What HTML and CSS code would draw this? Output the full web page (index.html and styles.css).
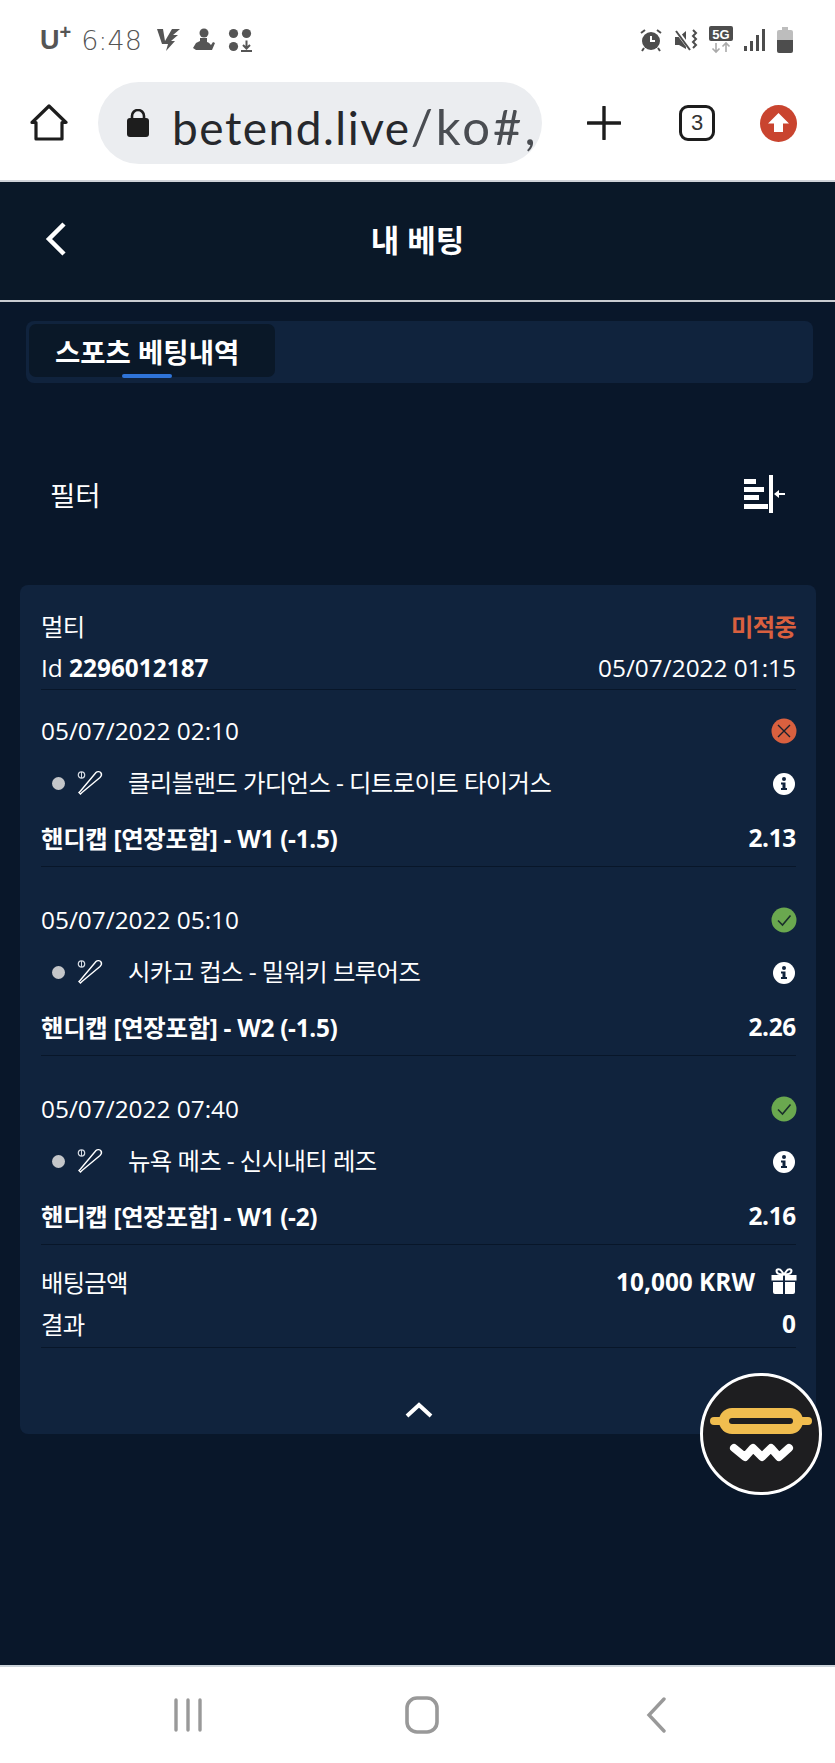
FILE: index.html
```html
<!DOCTYPE html>
<html lang="ko">
<head>
    <meta charset="UTF-8">
    <meta name="viewport" content="width=device-width, initial-scale=1.0">
    <title>내 베팅</title>
    <link rel="stylesheet" href="styles.css">
</head>
<body>
    <div class="status-bar">
        <div class="status-left">
            <span class="carrier">U<sup>+</sup></span>
            <span class="clock">6:48</span>
            <svg class="st-first" width="24" height="24" viewBox="0 0 24 24"><path d="M1 1h6l2 12L16 1h8l-7 6h5l-7 6h4l-9 10 2-7H6z" fill="#555"/></svg>
            <svg width="24" height="24" viewBox="0 0 24 24"><circle cx="12" cy="5" r="4.500" fill="#555"/><path d="M8 10h7v4c2 .5 3 2 4 3l2-3 2 1-3 7H4l-3-2 3-5 4-2z" fill="#555"/></svg>
            <svg width="24" height="24" viewBox="0 0 24 24"><circle cx="5.500" cy="5.500" r="4.600" fill="#555"/><circle cx="18.500" cy="5.500" r="4.600" fill="#555"/><circle cx="5.500" cy="18.500" r="4.600" fill="#555"/><path d="M18.500 12.500v8M15 17l3.500 3.500L22 17M13 23h11" stroke="#555" stroke-width="2" fill="none"/></svg>
        </div>
        <div class="status-right">
            <svg width="24" height="24" viewBox="0 0 24 24"><circle cx="12" cy="13" r="9" fill="#4d4d4d"/><path d="M12 8v5h4" stroke="#fff" stroke-width="2" fill="none"/><path d="M2 5l4-3M22 5l-4-3M5 20l-2 3M19 20l2 3" stroke="#4d4d4d" stroke-width="2"/></svg>
            <svg width="24" height="24" viewBox="0 0 24 24"><path d="M1 9h4l7-6v18l-7-4H1z" fill="#4d4d4d"/><path d="M2 2l15 20" stroke="#fff" stroke-width="4"/><path d="M2 3l14 19" stroke="#4d4d4d" stroke-width="2"/><path d="M19 2l3 3-3 3 3 3-3 3 3 3-3 3" stroke="#4d4d4d" stroke-width="2" fill="none"/></svg>
            <svg width="24" height="28" viewBox="0 0 24 28"><rect width="24" height="15" rx="2" fill="#4d4d4d"/><text x="12" y="12.500" class="five-g">5G</text><path d="M7 17v9M3.500 22.500l3.500 3.500 3.500-3.500M17 26v-9M13.500 20.500l3.500-3.500 3.500 3.500" stroke="#aaa" stroke-width="1.600" fill="none"/></svg>
            <svg width="22" height="24" viewBox="0 0 22 24"><rect x="0" y="18" width="3" height="5" fill="#4d4d4d"/><rect x="6" y="13" width="3" height="10" fill="#4d4d4d"/><rect x="12" y="7" width="3" height="16" fill="#4d4d4d"/><rect x="18" y="1" width="3" height="22" fill="#4d4d4d"/></svg>
            <svg width="16" height="26" viewBox="0 0 16 26"><path d="M5 0h6v3h3a2 2 0 0 1 2 2v8H0V5a2 2 0 0 1 2-2h3z" fill="#bdbdbd"/><path d="M0 13h16v11a2 2 0 0 1-2 2H2a2 2 0 0 1-2-2z" fill="#4d4d4d"/></svg>
        </div>
    </div>

    <div class="browser-bar">
        <svg class="home-icon" width="38" height="38" viewBox="0 0 38 38"><path d="M2 18.500L19 2l17 16.500h-4V35H6V18.500z" fill="none" stroke="#1d1d1d" stroke-width="3.200" stroke-linejoin="round"/></svg>
        <div class="url-pill">
            <svg width="22" height="28" viewBox="0 0 22 28"><rect y="9" width="22" height="19" rx="3" fill="#1d1d1d"/><path d="M5 11V7a6 6 0 0 1 12 0v4" fill="none" stroke="#1d1d1d" stroke-width="2.600"/></svg>
            <span class="url-text">betend.live<span class="url-path">/ko#,</span></span>
        </div>
        <svg class="plus-icon" width="34" height="34" viewBox="0 0 34 34"><path d="M17 1v32M1 17h32" stroke="#1d1d1d" stroke-width="3.400" stroke-linecap="round"/></svg>
        <div class="tab-count">3</div>
        <svg class="update-icon" width="37" height="37" viewBox="0 0 37 37"><circle cx="18.500" cy="18.500" r="18.500" fill="#c9442f"/><path d="M18.500 8L29 18.500h-6V27h-9v-8.500H8z" fill="#fff"/></svg>
    </div>

    <div class="page">
        <header class="page-header">
            <svg class="back-icon" width="22" height="34" viewBox="0 0 22 34"><path d="M19 2L4 17l15 15" fill="none" stroke="#fff" stroke-width="4.500"/></svg>
            <h1>내 베팅</h1>
        </header>

        <div class="tabs">
            <div class="tab-active">스포츠 베팅내역<span class="tab-line"></span></div>
        </div>

        <div class="filter-row">
            <span>필터</span>
            <svg width="42" height="38" viewBox="0 0 42 38"><path d="M0 4h12v5H0zM0 12h20v5H0zM0 20h15v5H0zM0 29h24v5H0z" fill="#fff"/><rect x="25" y="0" width="4" height="38" fill="#fff"/><path d="M30 19l5-4v3h6v2h-6v3z" fill="#fff"/></svg>
        </div>

        <section class="bet-card">
            <div class="card-head">
                <div class="row"><span class="ko">멀티</span><span class="lost-text">미적중</span></div>
                <div class="row"><span>Id <b>2296012187</b></span><span>05/07/2022 01:15</span></div>
            </div>

            <div class="game">
                <div class="row"><span>05/07/2022 02:10</span>
                    <svg class="result" width="26" height="26" viewBox="0 0 26 26"><circle cx="13" cy="13" r="12.500" fill="#d9603f"/><path d="M7 7l12 12M19 7L7 19" stroke="#1a1f2b" stroke-width="1.400"/></svg>
                </div>
                <div class="row team-row">
                    <span class="teams"><i class="dot"></i>
                        <svg class="bat" width="28" height="26" viewBox="0 0 28 26"><circle cx="5.500" cy="5" r="3.200" fill="none" stroke="#d5dbe3" stroke-width="1.200"/><path d="M5.500 2v6" stroke="#d5dbe3" stroke-width="1"/><path d="M20 2.500c1.500-1.500 4-1 5 .5s.5 3-1 4.500L9 20l-3 2.500L4.500 24 3 22.500l1.500-1.500L7 18z" fill="none" stroke="#fff" stroke-width="1.400"/></svg>
                        클리블랜드 가디언스 - 디트로이트 타이거스</span>
                    <svg class="info" width="22" height="22" viewBox="0 0 22 22"><circle cx="11" cy="11" r="11" fill="#fff"/><circle cx="11" cy="6" r="2" fill="#10233d"/><path d="M8 9.500h4.500V15H14v2H8v-2h1.500v-3.500H8z" fill="#10233d"/></svg>
                </div>
                <div class="row market"><span>핸디캡 [연장포함] - W1 (-1.5)</span><span>2.13</span></div>
            </div>

            <div class="game">
                <div class="row"><span>05/07/2022 05:10</span>
                    <svg class="result" width="26" height="26" viewBox="0 0 26 26"><circle cx="13" cy="13" r="12.500" fill="#6aa84f"/><path d="M7 13.500l4.500 4.500L19.500 8.500" fill="none" stroke="#1a2f2b" stroke-width="1.600"/></svg>
                </div>
                <div class="row team-row">
                    <span class="teams"><i class="dot"></i>
                        <svg class="bat" width="28" height="26" viewBox="0 0 28 26"><circle cx="5.500" cy="5" r="3.200" fill="none" stroke="#d5dbe3" stroke-width="1.200"/><path d="M5.500 2v6" stroke="#d5dbe3" stroke-width="1"/><path d="M20 2.500c1.500-1.500 4-1 5 .5s.5 3-1 4.500L9 20l-3 2.500L4.500 24 3 22.500l1.500-1.500L7 18z" fill="none" stroke="#fff" stroke-width="1.400"/></svg>
                        시카고 컵스 - 밀워키 브루어즈</span>
                    <svg class="info" width="22" height="22" viewBox="0 0 22 22"><circle cx="11" cy="11" r="11" fill="#fff"/><circle cx="11" cy="6" r="2" fill="#10233d"/><path d="M8 9.500h4.500V15H14v2H8v-2h1.500v-3.500H8z" fill="#10233d"/></svg>
                </div>
                <div class="row market"><span>핸디캡 [연장포함] - W2 (-1.5)</span><span>2.26</span></div>
            </div>

            <div class="game">
                <div class="row"><span>05/07/2022 07:40</span>
                    <svg class="result" width="26" height="26" viewBox="0 0 26 26"><circle cx="13" cy="13" r="12.500" fill="#6aa84f"/><path d="M7 13.500l4.500 4.500L19.500 8.500" fill="none" stroke="#1a2f2b" stroke-width="1.600"/></svg>
                </div>
                <div class="row team-row">
                    <span class="teams"><i class="dot"></i>
                        <svg class="bat" width="28" height="26" viewBox="0 0 28 26"><circle cx="5.500" cy="5" r="3.200" fill="none" stroke="#d5dbe3" stroke-width="1.200"/><path d="M5.500 2v6" stroke="#d5dbe3" stroke-width="1"/><path d="M20 2.500c1.500-1.500 4-1 5 .5s.5 3-1 4.500L9 20l-3 2.500L4.500 24 3 22.500l1.500-1.500L7 18z" fill="none" stroke="#fff" stroke-width="1.400"/></svg>
                        뉴욕 메츠 - 신시내티 레즈</span>
                    <svg class="info" width="22" height="22" viewBox="0 0 22 22"><circle cx="11" cy="11" r="11" fill="#fff"/><circle cx="11" cy="6" r="2" fill="#10233d"/><path d="M8 9.500h4.500V15H14v2H8v-2h1.500v-3.500H8z" fill="#10233d"/></svg>
                </div>
                <div class="row market"><span>핸디캡 [연장포함] - W1 (-2)</span><span>2.16</span></div>
            </div>

            <div class="totals">
                <div class="row"><span class="ko">배팅금액</span>
                    <span class="amount"><b>10,000 KRW</b>
                        <svg width="26" height="26" viewBox="0 0 25 26"><path d="M0 7h11.500v5.500H0zM13.500 7H25v5.500H13.500zM1.500 14h10v12h-8a2 2 0 0 1-2-2zM13.500 14h10v10a2 2 0 0 1-2 2h-8z" fill="#fff"/><path d="M12 6.500C9 6.500 5 5.500 5 3s3.500-2.500 5 0l2.500 3.500 2.500-3.500c1.500-2.500 5-2.500 5 0s-4 3.500-8 3.500" fill="none" stroke="#fff" stroke-width="2"/></svg>
                    </span>
                </div>
                <div class="row"><span class="ko">결과</span><b>0</b></div>
            </div>

            <div class="collapse">
                <svg width="28" height="16" viewBox="0 0 28 16"><path d="M2 14L14 3l12 11" fill="none" stroke="#fff" stroke-width="4"/></svg>
            </div>
        </section>

        <div class="chat-btn">
            <svg class="chat-logo" width="102" height="56" viewBox="0 0 102 56">
                <rect x="0" y="9" width="102" height="8" rx="4" fill="#f0bd4f"/>
                <rect x="9" y="0" width="84" height="26" rx="13" fill="#f0bd4f"/>
                <rect x="19" y="10" width="64" height="6" rx="3" fill="#1e1e20"/>
                <path d="M24 40l11 9 8-9 9 9 9-9 8 9 10-9" fill="none" stroke="#fff" stroke-width="8" stroke-linecap="round" stroke-linejoin="round"/>
            </svg>
        </div>
    </div>

    <nav class="nav-bar">
        <svg width="30" height="34" viewBox="0 0 30 34"><path d="M3 2v30M15 2v30M27 2v30" stroke="#999" stroke-width="3.400" stroke-linecap="round"/></svg>
        <svg width="34" height="38" viewBox="0 0 34 38"><rect x="2" y="2" width="30" height="34" rx="10" fill="none" stroke="#999" stroke-width="3.600"/></svg>
        <svg class="nav-back" width="20" height="36" viewBox="0 0 20 36"><path d="M18 2L3 18l15 16" fill="none" stroke="#999" stroke-width="3.400" stroke-linecap="round"/></svg>
    </nav>
</body>
</html>
```

FILE: styles.css
```css
* {
    margin: 0;
    padding: 0;
    box-sizing: border-box;
}

body {
    width: 835px;
    height: 1763px;
    overflow: hidden;
    background-color: #fff;
    font-family: "Open Sans", "Noto Sans CJK KR", sans-serif;
    font-size: 24.4px;
    color: #fff;
    display: flex;
    flex-direction: column;
}

/* 상태바 */
.status-bar {
    height: 80px;
    flex-shrink: 0;
    padding: 0 40px;
    display: flex;
    justify-content: space-between;
    align-items: center;
    color: #555;
}

.status-left,
.status-right {
    display: flex;
    align-items: center;
}

.status-left {
    gap: 12px;
}

.status-right {
    gap: 11px;
    padding-right: 2px;
}

.carrier {
    font-family: "Liberation Sans", sans-serif;
    font-weight: bold;
    font-size: 27px;
}

.carrier sup {
    font-size: 20px;
    line-height: 0;
}

.clock {
    font-family: "DejaVu Sans", sans-serif;
    font-weight: 200;
    font-size: 27px;
    margin-left: -2px;
}

.st-first {
    margin-left: 2px;
}

.five-g {
    font-family: "Liberation Sans", sans-serif;
    font-weight: bold;
    font-size: 13px;
    fill: #fff;
    text-anchor: middle;
}

/* 브라우저 주소창 */
.browser-bar {
    height: 102px;
    flex-shrink: 0;
    padding: 2px 0 16px;
    display: flex;
    align-items: center;
    border-bottom: 2px solid #cfd3d8;
}

.home-icon {
    margin-left: 30px;
}

.url-pill {
    width: 444px;
    height: 82px;
    margin-left: 30px;
    padding-left: 29px;
    background-color: #ebedf0;
    border-radius: 41px;
    display: flex;
    align-items: center;
    gap: 23px;
    overflow: hidden;
}

.url-text {
    font-family: "Lato", sans-serif;
    font-size: 46px;
    letter-spacing: 1.500px;
    color: #26282c;
    white-space: nowrap;
    padding-top: 6px;
}

.url-path {
    color: #4a4d52;
    font-size: 49px;
    letter-spacing: 3px;
}

.plus-icon {
    margin-left: 45px;
}

.tab-count {
    width: 36px;
    height: 36px;
    margin-left: 58px;
    border: 3.500px solid #1d1d1d;
    border-radius: 9px;
    font-family: "Liberation Sans", sans-serif;
    font-size: 22px;
    line-height: 29px;
    text-align: center;
    color: #333;
}

.update-icon {
    margin-left: 45px;
}

/* 본문 */
.page {
    position: relative;
    height: 1483px;
    flex-shrink: 0;
    background-color: #09172a;
    display: flex;
    flex-direction: column;
}

.page-header {
    height: 120px;
    flex-shrink: 0;
    background-color: #0a1828;
    border-bottom: 2px solid #c9ccd0;
    display: flex;
    align-items: center;
    justify-content: center;
    position: relative;
    padding-bottom: 6px;
}

.page-header h1 {
    font-size: 31px;
    font-weight: bold;
}

.back-icon {
    position: absolute;
    left: 45px;
    top: 40px;
}

.tabs {
    height: 62px;
    margin: 19px 22px 0 26px;
    padding: 3px;
    background-color: #10233d;
    border-radius: 8px;
    flex-shrink: 0;
}

.tab-active {
    position: relative;
    width: 246px;
    height: 53px;
    background-color: #0a1828;
    border-radius: 7px;
    padding-left: 26px;
    font-size: 27.500px;
    font-weight: bold;
    line-height: 58px;
}

.tab-line {
    position: absolute;
    left: 93px;
    bottom: -1px;
    width: 50px;
    height: 4px;
    background-color: #2f74d8;
    border-radius: 2px;
}

.filter-row {
    height: 202px;
    flex-shrink: 0;
    padding: 20px 49px 0 50px;
    display: flex;
    justify-content: space-between;
    align-items: center;
    font-size: 27.500px;
}

.bet-card {
    width: 796px;
    margin-left: 20px;
    padding: 0 20px 0 21px;
    background-color: #10233d;
    border-radius: 8px;
}

.row {
    display: flex;
    justify-content: space-between;
    align-items: center;
    white-space: nowrap;
}

.row b {
    font-weight: bold;
}

.ko {
    letter-spacing: -0.800px;
}

.card-head {
    height: 105px;
    padding-top: 19px;
    border-bottom: 1px solid #081629;
}

.card-head .row {
    height: 42px;
}

.lost-text {
    color: #d9603f;
    font-weight: bold;
    letter-spacing: -0.800px;
}

.game {
    height: 189px;
    padding-top: 31px;
    border-bottom: 1px solid #081629;
}

.card-head + .game {
    height: 177px;
    padding-top: 19px;
}

.game .row {
    height: 42px;
}

.result {
    margin: 2px -1px 0 0;
}

.team-row {
    margin-top: 9px;
}

.info {
    margin: 5px 1px 0 0;
}

.market {
    margin-top: 14px;
    font-weight: bold;
    letter-spacing: -0.300px;
}

.teams {
    display: flex;
    align-items: center;
    letter-spacing: -0.600px;
}

.dot {
    width: 13px;
    height: 13px;
    margin: 4px 11px 0 11px;
    border-radius: 50%;
    background-color: #c4c6c9;
}

.bat {
    margin: 4px 24px 0 0;
}

.totals {
    height: 103px;
    padding-top: 15px;
    border-bottom: 1px solid #081629;
}

.totals .row {
    height: 42px;
}

.amount {
    display: flex;
    align-items: center;
    gap: 16px;
    margin-right: -1px;
}

.collapse {
    height: 86px;
    display: flex;
    justify-content: center;
    padding-top: 54px;
}

.chat-btn {
    position: absolute;
    left: 700px;
    top: 1191px;
    width: 122px;
    height: 122px;
    background-color: #1e1e20;
    border: 3px solid #fff;
    border-radius: 50%;
    display: flex;
    align-items: center;
    justify-content: center;
}

.chat-logo {
    margin-top: 4px;
}

/* 하단 내비게이션 */
.nav-bar {
    height: 98px;
    flex-shrink: 0;
    background-color: #fff;
    border-top: 2px solid #cbd3da;
    padding-left: 173px;
    display: flex;
    gap: 202px;
    align-items: center;
}

.nav-back {
    margin-left: 5px;
}
```
